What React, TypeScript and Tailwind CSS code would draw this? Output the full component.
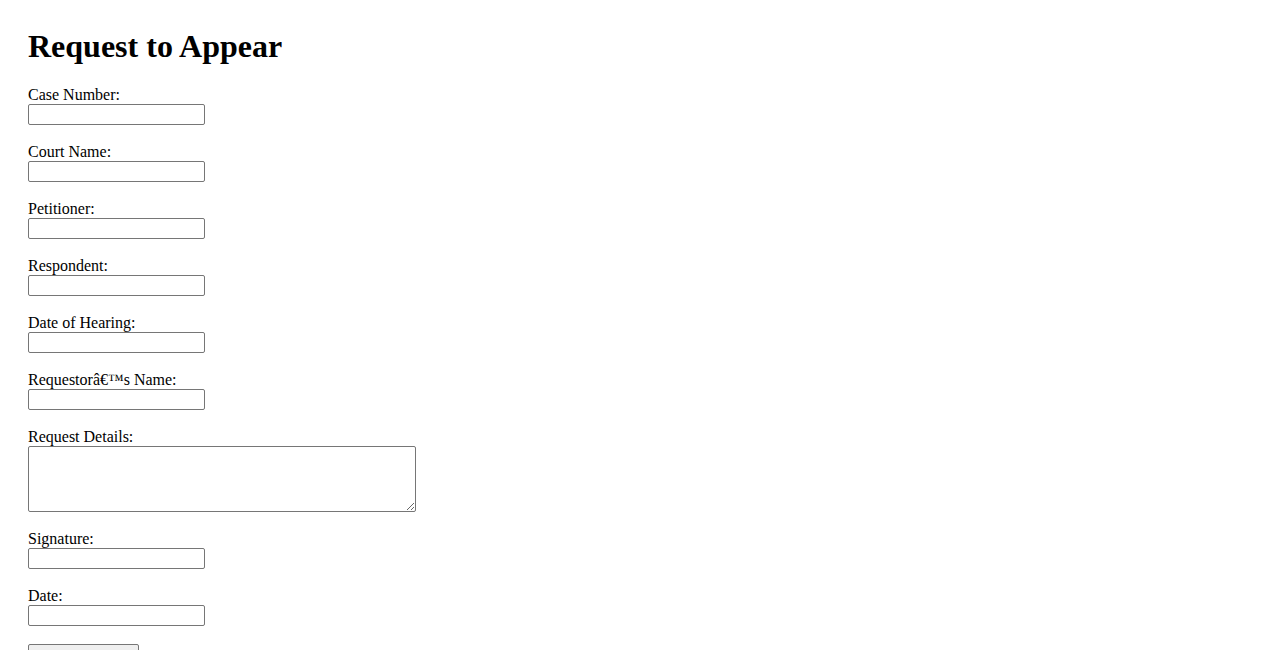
import React from "react";

const fields = [
  "Case Number:",
  "Court Name:",
  "Petitioner:",
  "Respondent:",
  "Date of Hearing:",
  "Requestorâ€™s Name:",
];

function TextField({ label }: { label: string }) {
  return (
    <div className="flex flex-col items-start">
      <label className="block text-[16px] leading-[18px]">{label}</label>
      <input
        type="text"
        className="w-[177px] h-[21px] border border-[#767676] rounded-[2px] bg-white px-[2px] text-[13.33px] font-['Liberation_Sans',Arial,sans-serif]"
      />
    </div>
  );
}

export default function App() {
  return (
    <div className="min-h-[650px] bg-white text-black p-7 font-['Liberation_Serif','Times_New_Roman',serif]">
      <h1 className="text-[32px] leading-[37px] font-bold mb-[21px]">Request to Appear</h1>
      <form className="flex flex-col gap-[18px] items-start">
        {fields.map((f) => (
          <TextField key={f} label={f} />
        ))}
        <div className="flex flex-col items-start">
          <label className="block text-[16px] leading-[18px]">Request Details:</label>
          <textarea className="w-[388px] h-[66px] border border-[#767676] rounded-[2px] bg-white px-[2px] text-[13.33px] font-['Liberation_Mono',monospace]" />
        </div>
        <TextField label="Signature:" />
        <TextField label="Date:" />
        <button
          type="submit"
          className="w-[111px] h-[21px] bg-[#efefef] border border-[#767676] rounded-[2px] px-[6px] text-[13.33px] text-black font-['Liberation_Sans',Arial,sans-serif]"
        >
          Submit Request
        </button>
      </form>
    </div>
  );
}
